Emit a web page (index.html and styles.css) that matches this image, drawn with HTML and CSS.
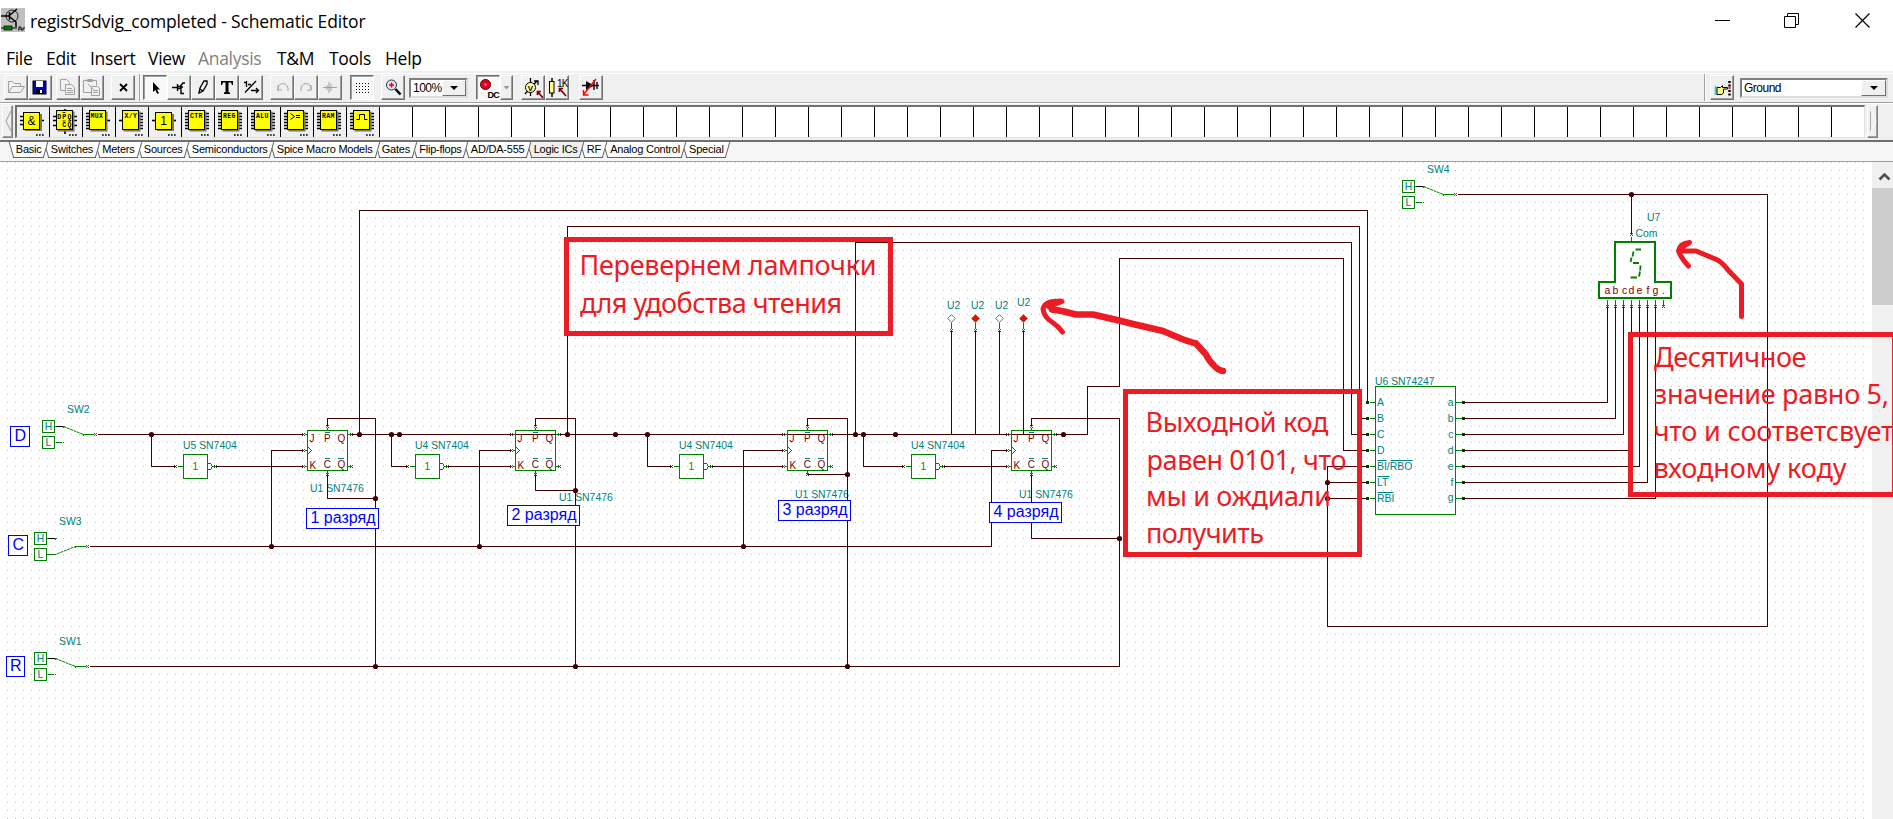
FILE: index.html
```html
<!DOCTYPE html>
<html lang="ru">
<head>
<meta charset="utf-8">
<title>registrSdvig_completed - Schematic Editor</title>
<link rel="stylesheet" href="styles.css">
</head>
<body>
<svg width="0" height="0" class="defs">
  <defs>
    <g id="mark"><path d="M-1.5-1h1M.5-1h1M-1.5 1h1M.5 1h1M-.5 0h1" stroke="#f00000"/></g>
    <g id="node"><circle r="2.6" fill="#400000"/></g>
    <g id="sw-box">
      <rect class="g" width="12" height="12"/><rect class="g" y="16" width="12" height="12"/>
      <text class="lbl" x="2.2" y="9.5">H</text><text class="lbl" x="3" y="25.5">L</text>
      <path d="M13 6h8" stroke="#000"/><path class="g" d="M13 22h6M21 21.5v1M20 6h2M21 5v2M41 14h10M41 13v2"/>
      <use href="#mark" x="53" y="14"/>
    </g>
    <g id="inv">
      <rect class="g" width="24" height="24"/><path class="g" d="M-6 12h6M29 12h3M24 9h3l2 3l-2 3h-3"/>
      <text class="one" x="8.8" y="15.500">1</text>
      <use href="#mark" x="-8" y="12"/><use href="#mark" x="32" y="12"/>
    </g>
    <g id="ff">
      <rect class="g" width="40" height="40"/>
      <path class="g" d="M-3 4h3M-3 20h3M-3 36h3M40 4h3M40 36h3M20-3v3M20 40v3M0 16l4 4l-4 4"/>
      <g class="pin"><text x="2" y="11.5">J</text><text x="16.6" y="11.8">P</text><text x="30" y="11.5">Q</text><text x="2" y="38.500">K</text><text x="16.2" y="37.500">C</text><text x="30" y="37.500">Q</text></g>
      <path d="M17.500 2h5M17.500 28h5M30.500 28h6" stroke="#008080"/>
      <use href="#mark" x="-4" y="4"/><use href="#mark" x="-4" y="20"/><use href="#mark" x="-4" y="36"/>
      <use href="#mark" x="44" y="4"/><use href="#mark" x="44" y="36"/><use href="#mark" x="20" y="-4"/><use href="#mark" x="20" y="44"/>
    </g>
    <g id="lamp"><path class="g" d="M0 4v6"/><path d="M0-3.800l3.800 3.800l-3.800 3.800l-3.800-3.800z" stroke="#008000" stroke-width=".8"/><use href="#mark" y="12"/></g>
    <g id="chip">
      <path d="M4.500 22.500h16v-19" stroke="#777" stroke-width="2" fill="none"/>
      <rect x="3.500" y="2.500" width="16" height="19" fill="#ff0" stroke="#000"/>
    </g>
    <g id="pinsL"><path d="M0 5.500h3M0 8.500h3M0 11.500h3M0 14.500h3M0 17.500h3M0 20.500h3" stroke="#000" stroke-width="1.400"/></g>
    <g id="pinsR"><path d="M20 5.500h4M20 8.500h4M20 11.500h4M20 14.500h4M20 17.500h4M20 20.500h4" stroke="#000" stroke-width="1.400"/></g>
    <g id="more"><path d="M16 27h1.700M19 27h1.700M22 27h1.700" stroke="#000" stroke-width="1.700"/></g>
  </defs>
</svg>

<header class="titlebar">
  <svg class="appicon" width="24" height="24" viewBox="0 0 24 24">
    <rect width="24" height="24" fill="#c0c0c0"/>
    <circle cx="11" cy="8" r="6" fill="none" stroke="#222"/><path d="M0 8h8M8.500 4v8M9 7l7-6M9 9l6 5v5" stroke="#000" stroke-width="1.500" fill="none"/>
    <rect x="3" y="18" width="8" height="4" fill="#008000" stroke="#000" stroke-width=".7"/><path d="M0 20h3M11 20h5M17 22h1v-3h2v3h2v-2h2" stroke="#000" fill="none"/>
  </svg>
  <span class="title">registrSdvig_completed - Schematic Editor</span>
  <svg class="winbtns" width="156" height="16" viewBox="0 0 156 16" fill="none" stroke="#000">
    <path d="M0 7.500h15M69.500 3.500h11v11h-11zM72.500 3v-2.500h11v11h-3"/><path d="M140.500.5l14 14M154.500.5l-14 14" stroke-width="1.200"/>
  </svg>
</header>

<nav class="menu">
  <span class="m1">File</span><span class="m2">Edit</span><span class="m3">Insert</span><span class="m4">View</span><span class="m5">Analysis</span><span class="m6">T&amp;M</span><span class="m7">Tools</span><span>Help</span>
</nav>

<div class="toolbar">
  <div class="group">
    <span class="btn"><svg viewBox="0 0 24 24"><path d="M4.500 17.500v-11h4l2 2h6v3M4.500 17.500l4-6h12l-4 6z" class="dis"/></svg></span>
    <span class="btn"><svg viewBox="0 0 24 24"><rect x="5" y="6" width="13" height="13" fill="#0000c0" stroke="#000"/><rect x="8" y="6" width="7" height="6" fill="#fff"/><rect x="8" y="14" width="7" height="5" fill="#000"/><rect x="12" y="15" width="2" height="3" fill="#fff"/></svg></span>
  </div>
  <div class="group g2">
    <span class="btn"><svg viewBox="0 0 24 24"><path class="dis" d="M9 15.500h-4.500v-11h6l3 3v2M9.500 9.500h6l3 3v7h-9zM11 13.500h5M11 15.500h6M11 17.500h6"/></svg></span>
    <span class="btn"><svg viewBox="0 0 24 24"><path class="dis" d="M11 17.500h-7.500v-12h13v5M7.500 6.500v-2h5v2zM8 9l5 5M11.500 11.500h6l2 2v7h-8zM13 15.500h5M13 17.500h5"/></svg></span>
  </div>
  <div class="group g3"><span class="btn"><svg viewBox="0 0 24 24"><path d="M9 9l7 7M16 9l-7 7" stroke="#000" stroke-width="1.800"/></svg></span></div>
  <i class="sep"></i>
  <div class="group g4">
    <span class="btn on"><svg viewBox="0 0 24 24"><path d="M10 7v10l2.300-2l2 4l1.700-1l-2-3.500h3z" fill="#000"/></svg></span>
    <span class="btn"><svg viewBox="0 0 24 24"><path d="M5 12.500h5M10.500 9v7M11 11.500h2l3-3.500h2M11 13.500h3v5h3M13 12l3 0" stroke="#000" stroke-width="1.400" fill="none"/></svg></span>
    <span class="btn"><svg viewBox="0 0 24 24"><path d="M8 18l1-5l4-7h3v3l-4 7zM9 14l3 2" stroke="#000" stroke-width="1.300" fill="none"/></svg></span>
    <span class="btn"><svg viewBox="0 0 24 24"><path d="M6 6h12v4h-1l-1-2.500h-2.500V17l1.500.5V19h-6v-1.500l1.500-.5V7.500H8L7 10H6z" fill="#000"/></svg></span>
    <span class="btn"><svg viewBox="0 0 24 24"><path d="M7.500 6v6M5 7.500h3M9 9.500h3M6 17.500L17 6M12 15.500h7M17 13l2.500 2.500L17 18" stroke="#000" stroke-width="1.300" fill="none"/></svg></span>
  </div>
  <div class="group g5">
    <span class="btn"><svg viewBox="0 0 24 24"><path class="dis" d="M8 15v-5M7 15h5M8 14c0-6 8-8 10-1v3"/></svg></span>
    <span class="btn"><svg viewBox="0 0 24 24"><path class="dis" d="M17 15v-5M18 15h-5M17 14c0-6-8-8-10-1v3"/></svg></span>
    <span class="btn"><svg viewBox="0 0 24 24"><path class="dis" d="M5 12.500h14M11 7v11M13 9v7M9 10v5"/></svg></span>
  </div>
  <div class="group g6"><span class="btn on"><svg viewBox="0 0 24 24"><path d="M6 8.500h14M6 11.500h14M6 14.500h14M6 17.500h14" stroke="#000" stroke-dasharray="1 2"/></svg></span></div>
  <div class="group g7"><span class="btn"><svg viewBox="0 0 24 24"><circle cx="10.500" cy="10" r="5" fill="#dde6ff" stroke="#333"/><path d="M8 10h5M10.500 7.500v5" stroke="#f00" stroke-width="1.600"/><path d="M14.500 14l5 5.500" stroke="#000" stroke-width="2.600"/></svg></span></div>
  <div class="combo zoom"><span>100%</span><i class="dd"></i></div>
  <div class="group g8">
    <span class="btn on"><svg viewBox="0 0 24 24"><circle cx="9.500" cy="9.500" r="5" fill="#e00010" stroke="#500"/><circle cx="9.500" cy="9.500" r="1.600" fill="#f3f"/><text x="11.500" y="22.500" class="dc">DC</text></svg></span>
    <span class="btn slim"><svg viewBox="0 0 12 24"><path d="M3.500 11h6l-3 3.500z" fill="#999"/></svg></span>
  </div>
  <div class="group g9">
    <span class="btn"><svg viewBox="0 0 24 24"><path d="M9.500 3v18M4 19l12-13M13 6h4v4" stroke="#000" stroke-width="1.300" fill="none"/><circle cx="9.500" cy="12.500" r="5" fill="#ff9" stroke="#000"/><text x="6.800" y="15.500" class="v">V</text><path d="M22 23l-5-6M16.500 20v-3.500H20" stroke="#800000" stroke-width="1.700" fill="none"/></svg></span>
    <span class="btn"><svg viewBox="0 0 24 24"><path d="M7 3v19" stroke="#000" stroke-width="1.500"/><rect x="4.500" y="6.500" width="4.500" height="11.500" fill="#ff8" stroke="#000"/><text x="12" y="11.500" class="k">1K</text><path d="M21 21l-6-7M14.500 17v-3.500H18" stroke="#800000" stroke-width="1.700" fill="none"/></svg></span>
  </div>
  <div class="group g10"><span class="btn"><svg viewBox="0 0 24 24"><path d="M3 10.500h17M15 5v10M18 7v7" stroke="#000" stroke-width="1.400"/><path d="M7 6v9l8-4.500z" fill="#000"/><path d="M17 4L5 19M4.500 15v5h5" stroke="#f00" stroke-width="1.400" fill="none"/></svg></span></div>
  <i class="sep right"></i>
  <div class="group g11"><span class="btn"><svg viewBox="0 0 24 24"><path d="M5.500 11v9" stroke="#0dd" stroke-width="1.600"/><path d="M7 12.500h3.500l2-2v2h5v1.500h-4v4l-2 1.500h-4.500z" fill="#ff8" stroke="#000"/><path d="M19.500 6v2M19.500 9.500v2M19.500 15v2M19.500 18.500v2" stroke="#000" stroke-width="2.500"/><path d="M19.500 12v2" stroke="#f00" stroke-width="2"/></svg></span></div>
  <div class="combo ground"><span>Ground</span><i class="dd"></i></div>
</div>

<div class="partsbar">
  <span class="scroll"><svg viewBox="0 0 10 30"><path d="M8 5L3 15l5 10" stroke="#999" fill="none"/></svg></span>
  <div class="parts">
    <span class="part"><svg viewBox="0 0 24 29"><path d="M0 8.500h4M0 12.500h4M0 16.500h4M20 12.500h4" stroke="#000" stroke-width="1.600"/><path d="M5 22h16V6" stroke="#777" stroke-width="2" fill="none"/><rect x="3.500" y="4.500" width="16" height="17" fill="#ff0" stroke="#000"/><text x="7.500" y="17" class="amp">&amp;</text><use href="#more"/></svg></span>
    <span class="part"><svg viewBox="0 0 24 29"><path d="M0 8.500h24M0 12.500h24M0 17.500h24M12 1v25" stroke="#000" stroke-width="1.600"/><use href="#chip"/><text x="4.300" y="10.500" class="pt">D</text><text x="9.300" y="10.500" class="pt">P</text><text x="14.500" y="10.500" class="pt">Q</text><text x="9.300" y="19" class="pt">C</text><text x="14.500" y="19" class="pt">Q</text><path d="M9.500 4.500h3M9.500 13h3M15 13h3" stroke="#000" stroke-width=".8"/><use href="#more"/></svg></span>
    <span class="part"><svg viewBox="0 0 24 29"><use href="#pinsL"/><path d="M20 12.500h4" stroke="#000" stroke-width="1.600"/><use href="#chip"/><text x="4.500" y="9.500" class="pt">MUX</text><use href="#more"/></svg></span>
    <span class="part"><svg viewBox="0 0 24 29"><path d="M0 12.500h4" stroke="#000" stroke-width="1.600"/><use href="#pinsR"/><use href="#chip"/><text x="5.500" y="9.500" class="pt">X/Y</text><use href="#more"/></svg></span>
    <span class="part"><svg viewBox="0 0 24 29"><path d="M0 12.500h24" stroke="#000" stroke-width="1.600"/><path d="M5 22h16V6" stroke="#777" stroke-width="2" fill="none"/><rect x="3.500" y="4.500" width="16" height="17" fill="#ff0" stroke="#000"/><text x="8.300" y="17" class="amp">1</text><use href="#more"/></svg></span>
    <span class="part"><svg viewBox="0 0 24 29"><use href="#pinsL"/><use href="#pinsR"/><use href="#chip"/><text x="5" y="9.500" class="pt">CTR</text><use href="#more"/></svg></span>
    <span class="part"><svg viewBox="0 0 24 29"><use href="#pinsL"/><use href="#pinsR"/><use href="#chip"/><text x="5" y="9.500" class="pt">REG</text><use href="#more"/></svg></span>
    <span class="part"><svg viewBox="0 0 24 29"><use href="#pinsL"/><use href="#pinsR"/><use href="#chip"/><text x="5" y="9.500" class="pt">ALU</text><use href="#more"/></svg></span>
    <span class="part"><svg viewBox="0 0 24 29"><use href="#pinsL"/><use href="#pinsR"/><use href="#chip"/><path d="M6.500 5.500l4 3l-4 3M12 7.500h4M12 9.500h4" stroke="#000" fill="none"/><use href="#more"/></svg></span>
    <span class="part"><svg viewBox="0 0 24 29"><use href="#pinsL"/><use href="#pinsR"/><use href="#chip"/><text x="5" y="9.500" class="pt">RAM</text><use href="#more"/></svg></span>
    <span class="part"><svg viewBox="0 0 24 29"><use href="#pinsL"/><use href="#pinsR"/><use href="#chip"/><path d="M6.500 11.500h3v-5h5v5h3" stroke="#000" fill="none"/><use href="#more"/></svg></span>
    <span class="slots"></span>
  </div>
  <span class="scroll"><svg viewBox="0 0 10 30"><path d="M2.500 5v20" stroke="#aaa"/><path d="M3 5l5 10l-5 10" stroke="#fff" fill="none"/></svg></span>
</div>

<div class="tabs">
  <span class="tab"><b>Basic</b></span><span class="tab"><b>Switches</b></span><span class="tab"><b>Meters</b></span><span class="tab"><b>Sources</b></span><span class="tab"><b>Semiconductors</b></span><span class="tab"><b>Spice Macro Models</b></span><span class="tab"><b>Gates</b></span><span class="tab"><b>Flip-flops</b></span><span class="tab"><b>AD/DA-555</b></span><span class="tab active"><b>Logic ICs</b></span><span class="tab"><b>RF</b></span><span class="tab"><b>Analog Control</b></span><span class="tab"><b>Special</b></span>
</div>

<main class="work">
  <svg class="sheet" width="1872" height="657" viewBox="0 162 1872 657">
    <defs><pattern id="grid" width="8" height="8" patternUnits="userSpaceOnUse"><rect x="7" y="2" width="1" height="1" fill="#c0c0c0"/></pattern></defs>
    <rect x="0" y="162" width="1867" height="657" fill="url(#grid)"/>
    <g transform="translate(.5 .5)">
      <use href="#sw-box" x="42" y="420"/><path class="arm" d="M63 426L83 434"/>
      <use href="#sw-box" x="34" y="652"/><path class="arm" d="M55 658L75 666"/>
      <use href="#sw-box" x="34" y="532"/><path class="arm" d="M46 554h9L75 546"/>
      <use href="#sw-box" x="1402" y="180"/><path class="arm" d="M1423 186L1443 194"/>
      <use href="#inv" x="183" y="454"/><use href="#inv" x="415" y="454"/><use href="#inv" x="679" y="454"/><use href="#inv" x="911" y="454"/>
      <g class="lbl">
        <text x="66.500" y="412.500">SW2</text><text x="58.500" y="524.500">SW3</text><text x="58.500" y="644.500">SW1</text><text x="1426.500" y="172.500">SW4</text>
        <text x="182.500" y="448.500">U5 SN7404</text><text x="414.500" y="448.500">U4 SN7404</text><text x="678.500" y="448.500">U4 SN7404</text><text x="910.500" y="448.500">U4 SN7404</text>
        <text x="309.500" y="491.500">U1 SN7476</text><text x="558.500" y="500.500">U1 SN7476</text><text x="794.500" y="497.500">U1 SN7476</text><text x="1018.500" y="497.500">U1 SN7476</text>
        <text x="946.500" y="308.500">U2</text><text x="970.500" y="308.500">U2</text><text x="994.500" y="308.500">U2</text><text x="1016.500" y="305.500">U2</text>
        <text x="1646.500" y="220.500">U7</text><text x="1635" y="236.500">Com</text><text x="1374.500" y="384">U6 SN74247</text>
        <text x="1376.500" y="405.500">A</text><text x="1376.500" y="421.500">B</text><text x="1376.500" y="437.500">C</text><text x="1376.500" y="453.500">D</text><text x="1376.500" y="469.500">BI/RBO</text><text x="1376.500" y="485.500">LT</text><text x="1376.500" y="501.500">RBI</text>
        <g text-anchor="end"><text x="1453" y="405.500">a</text><text x="1453" y="421.500">b</text><text x="1453" y="437.500">c</text><text x="1453" y="453.500">d</text><text x="1453" y="469.500">e</text><text x="1453" y="485.500">f</text><text x="1453" y="500.500">g</text></g>
      </g>
      <path class="over" d="M1377 460h9M1390 460h22M1377 476h12M1377 492h16"/>
      <rect class="g" x="1375" y="386" width="80" height="128"/>

      <path class="wire" d="M97 434H303M351 434H1087V386H1119V258H1343V450H1367
        M151 434V466H175M215 466H303M391 434V466H407M447 466H511M647 434V466H671M711 466H783M863 434V466H903M943 466H1007
        M89 546H991V450H1007M271 546V450H303M479 546V450H511M743 546V450H783
        M89 666H1119V418H1031V426M327 426V418H375V666M535 426V418H575V666M807 426V418H847V666
        M327 474V498H375M535 474V490H575M807 474H847M1031 474V538H1119
        M359 434V210H1367V402M567 434V226H1359V418H1367M855 434V242H1351V434H1367
        M951 330V434M975 330V434M999 330V434M1023 330V434
        M1367 466H1327V626H1767V194H1457M1327 482H1367M1327 498H1367M1631 194V234
        M1463 402H1607V306M1463 418H1615V306M1463 434H1623V306M1463 450H1631V306M1463 466H1639V306M1463 482H1647V306M1463 498H1655V306"/>
      <path class="g" d="M1369 402h6M1369 418h6M1369 434h6M1369 450h6M1369 466h6M1369 482h6M1369 498h6M1455 402h7M1455 418h7M1455 434h7M1455 450h7M1455 466h7M1455 482h7M1455 498h7"/>
      <path class="pads" d="M1367 400.500v99M1463 400.500v99"/>
      <use href="#ff" x="307" y="430"/><use href="#ff" x="515" y="430"/><use href="#ff" x="787" y="430"/><use href="#ff" x="1011" y="430"/>
      <use href="#lamp" x="951" y="318" fill="#fff"/><use href="#lamp" x="975" y="318" fill="#f00"/><use href="#lamp" x="999" y="318" fill="#fff"/><use href="#lamp" x="1023" y="318" fill="#f00"/>

      <use href="#node" x="151" y="434"/><use href="#node" x="359" y="434"/><use href="#node" x="391" y="434"/><use href="#node" x="399" y="434"/><use href="#node" x="567" y="434"/><use href="#node" x="615" y="434"/><use href="#node" x="647" y="434"/><use href="#node" x="855" y="434"/><use href="#node" x="863" y="434"/><use href="#node" x="895" y="434"/><use href="#node" x="1063" y="434"/>
      <use href="#node" x="271" y="546"/><use href="#node" x="479" y="546"/><use href="#node" x="743" y="546"/>
      <use href="#node" x="375" y="498"/><use href="#node" x="375" y="666"/><use href="#node" x="575" y="490"/><use href="#node" x="575" y="666"/><use href="#node" x="847" y="474"/><use href="#node" x="847" y="666"/><use href="#node" x="1119" y="538"/>
      <use href="#node" x="1327" y="482"/><use href="#node" x="1327" y="498"/><use href="#node" x="1631" y="194"/>

      <path d="M1614.500 281.500V241.500H1654.500V281.500H1670.500V297.500H1598.500V281.500Z" fill="#fff" stroke="#008000" stroke-width="2"/>
      <path class="seg" d="M1635 249h5.500M1633 251l-1 5M1631 257l-.8 4.500M1632.500 262.500h6M1640 265l-.3 5M1639.500 271l-1 5M1630 277h6.500"/>
      <g class="pin seven"><text x="1607" y="293">a</text><text x="1615" y="293">b</text><text x="1624" y="293">c</text><text x="1631" y="293">d</text><text x="1639" y="293">e</text><text x="1647.500" y="293">f</text><text x="1655" y="293">g</text><text x="1663" y="293">.</text></g>
      <path class="g" d="M1631 236v5M1607 299v6M1615 299v6M1623 299v6M1631 299v6M1639 299v6M1647 299v6M1655 299v6M1663 299v6"/>
      <use href="#mark" x="1631" y="234"/><use href="#mark" x="1607" y="306"/><use href="#mark" x="1615" y="306"/><use href="#mark" x="1623" y="306"/><use href="#mark" x="1631" y="306"/><use href="#mark" x="1639" y="306"/><use href="#mark" x="1647" y="306"/><use href="#mark" x="1655" y="306"/><use href="#mark" x="1663" y="306"/>

      <g class="tag">
        <rect x="10" y="426" width="19" height="20"/><rect x="8" y="535" width="19" height="20"/><rect x="6" y="656" width="18" height="20"/>
        <rect x="306" y="508" width="72" height="20"/><rect x="507" y="505" width="72" height="20"/><rect x="778" y="500" width="72" height="20"/><rect x="989" y="502" width="72" height="20"/>
        <text x="14" y="440.500">D</text><text x="12" y="549.500">C</text><text x="9.500" y="670">R</text>
        <text x="310" y="522.500" textLength="65">1 разряд</text><text x="511" y="519.500" textLength="65">2 разряд</text><text x="782" y="514.500" textLength="65">3 разряд</text><text x="993" y="516.500" textLength="65">4 разряд</text>
      </g>
    </g>
  </svg>

  <aside class="scrollbar">
    <svg width="21" height="26" viewBox="0 0 21 26"><path d="M7.500 17.500l5-5l5 5" fill="none" stroke="#505050" stroke-width="2.600"/></svg>
    <div class="thumb"></div>
  </aside>

  <svg class="notes" width="1893" height="657" viewBox="0 162 1893 657">
    <rect x="566.500" y="239.500" width="324" height="94"/><rect x="1125.500" y="391.500" width="234" height="163"/><rect x="1630.500" y="334.500" width="264" height="160"/>
    <path class="long" d="M1223 371Q1218 370.500 1213 364.500Q1209 361 1206 354.500L1196 343.500Q1187 341 1182 339L1163 331L1133 324L1117 320L1093 314.500H1076L1062 311L1052 309.500"/>
    <path d="M1053 310Q1049 307 1053 305L1062 301.500Q1045 300 1043 309Q1044 317 1052 322Q1058 326 1062.500 332M1049 307L1060 301"/>
    <path d="M1741.500 316.500V284L1728 270Q1722 262 1716.500 259.500L1696 251H1679M1689.500 242.500Q1680 243 1678.500 251Q1681 258 1688.500 266M1680 248L1689 243"/>
    <g>
      <text x="579.500" y="275" textLength="297">Перевернем лампочки</text><text x="580" y="313" textLength="262">для удобства чтения</text>
      <text x="1145.500" y="432" textLength="183">Выходной код</text><text x="1146.500" y="469.500" textLength="200">равен 0101, что</text><text x="1146" y="506" textLength="185">мы и ождиали</text><text x="1146" y="543" textLength="118">получить</text>
      <text x="1654" y="367" textLength="152.500">Десятичное</text><text x="1654" y="404" textLength="235">значение равно 5,</text><text x="1653.500" y="440.500" textLength="240">что и соответсвует</text><text x="1653.500" y="477.500" textLength="193">входному коду</text>
    </g>
  </svg>
</main>
</body>
</html>
```

FILE: styles.css
```css
* { box-sizing: border-box; }
body { margin: 0; width: 1893px; height: 819px; overflow: hidden; background: #fff; display: flex; flex-direction: column; color: #000; }
.defs { position: absolute; }

.titlebar { height: 40px; display: flex; align-items: flex-start; padding: 0 22px 0 1px; }
.appicon { margin-top: 8px; }
.title { font: 17.5px/24px "Open Sans", "Noto Sans", sans-serif; margin: 9px auto 0 5px; letter-spacing: -.15px; }
.winbtns { margin-top: 13px; }
.menu { height: 31px; padding-left: 6px; display: flex; font: 17.5px/24px "Open Sans", "Noto Sans", sans-serif; letter-spacing: -.3px; padding-top: 6px; }
.m1 { width: 40px; } .m2 { width: 44px; } .m3 { width: 58px; } .m4 { width: 50px; }
.m5 { width: 79px; color: #808080; } .m6 { width: 52px; } .m7 { width: 56px; }

.toolbar { height: 32px; background: #f0f0f0; border-top: 2px solid #f0f0f0; border-bottom: 1px solid #a0a0a0; box-shadow: inset 0 1px #fff; display: flex; align-items: flex-start; padding: 2px 5px 0 4px; }
.group { display: flex; }
.btn { width: 24px; height: 25px; background: #f0f0f0; border: 1px solid; border-color: #fff #707070 #707070 #fff; box-shadow: inset -1px -1px #a0a0a0; display: block; }
.btn svg { display: block; width: 24px; height: 24px; margin: -1px 0 0 -1px; }
.btn.on { background: #f8f8f8; border-color: #707070 #fff #fff #707070; box-shadow: inset 1px 1px #a0a0a0; }
.btn.slim { width: 13px; }
.btn.slim svg { width: 12px; }
.dis { fill: none; stroke: #a0a0a0; }
.g2 { margin-left: 4px; } .g3 { margin-left: 7px; }
.sep { width: 2px; height: 27px; margin: -1px 0 0 4px; border-left: 1px solid #a0a0a0; background: #fff; }
.g4 { margin-left: 2px; } .g5 { margin-left: 7px; } .g6 { margin-left: 8px; } .g7 { margin-left: 7px; }
.combo { height: 20px; margin-top: 3px; background: #fff; border: 2px solid; border-color: #808080 #ddd #ddd #808080; display: flex; justify-content: space-between; font: 12px/16px "Liberation Sans", Arial, sans-serif; padding-left: 2px; letter-spacing: -.5px; }
.zoom { width: 59px; margin-left: 4px; }
.ground { width: 148px; margin-left: 6px; }
.dd { width: 25px; height: 16px; background: #f0f0f0; border: 1px solid; border-color: #fff #707070 #707070 #fff; display: flex; justify-content: center; align-items: center; }
.dd::after { content: ""; border: 4px solid transparent; border-top-color: #000; border-bottom: 0; }
.g8 { margin-left: 8px; } .g9 { margin-left: 8px; } .g10 { margin-left: 10px; }
.right { margin-left: auto; } .g11 { margin-left: 4px; }
.dc { font: bold 9px "Liberation Sans", sans-serif; letter-spacing: -.8px; }
.v { font: bold 8px "Liberation Sans", sans-serif; }
.k { font: 10px "Liberation Sans", sans-serif; letter-spacing: -.7px; }

.partsbar { height: 39px; background: #f0f0f0; border-top: 1px solid #fff; border-bottom: 2px solid #707070; display: flex; padding: 1px 0 0 2px; }
.scroll { flex: none; width: 11px; height: 33px; border: 1px solid; border-color: #fff #808080 #808080 #fff; box-shadow: inset -1px -1px #a0a0a0; }
.scroll svg { width: 10px; height: 30px; display: block; }
.parts { flex: none; width: 1850px; height: 33px; border: 1px solid #e0e0e0; border-top: 2px solid #707070; border-left: 2px solid #707070; display: flex; background: #fff; margin: 0 2px; }
.part { width: 33px; height: 30px; background: #f0f0f0; border-right: 1px solid #000; padding: 1px 0 0 3px; flex: none; }
.part svg { width: 24px; height: 29px; display: block; }
.slots { flex: 1; background: repeating-linear-gradient(90deg, #fff 0 32px, #000 32px 33px); }
.pt { font: bold 6.500px "Liberation Mono", monospace; letter-spacing: .4px; }
.amp { font: 12px "Liberation Sans", sans-serif; }

.tabs { height: 20px; background: #f6f6f6; border-bottom: 1px solid #a0a0a0; display: flex; padding-left: 9px; font: 11px/14px "Liberation Sans", Arial, sans-serif; }
.tab { position: relative; height: 15px; padding: 0 6.800px; margin-right: -4.400px; letter-spacing: -.22px; }
.tab b { position: relative; z-index: 2; font-weight: normal; white-space: nowrap; display: block; }
.tab::before, .tab::after { content: ""; position: absolute; top: 0; height: 15px; width: 52%; background: #fff; border-bottom: 1px solid #606060; }
.tab::before { left: 2px; z-index: 0; border-left: 1px solid #606060; transform: skewX(16deg); }
.tab::after { right: 2px; z-index: 1; border-right: 1px solid #606060; transform: skewX(-16deg); }
.tab.active::before, .tab.active::after { background: #f0f0f0; }

.work { flex: 1; position: relative; display: flex; }
.sheet { flex: none; display: block; }
.g { fill: none; stroke: #008000; shape-rendering: crispEdges; }
#mark path { shape-rendering: crispEdges; }
.arm { fill: none; stroke: #008000; stroke-dasharray: 3 .6; }
.pads { stroke: #004000; stroke-width: 3; stroke-dasharray: 3 13; }
.lbl { font: 10.400px "Liberation Sans", Arial, sans-serif; fill: #008080; }
.one { font: 11px "Liberation Sans", Arial, sans-serif; fill: #408000; }
.pin { font: 10px "Liberation Sans", Arial, sans-serif; fill: #800000; }
.seven { text-anchor: middle; font-size: 10.500px; }
.over { stroke: #008080; }
.wire { fill: none; stroke: #400000; shape-rendering: crispEdges; }
.seg { fill: none; stroke: #008000; stroke-width: 1.800; }
.tag rect { fill: #fff; stroke: #00f; }
.tag text { font: 16px "Liberation Sans", Arial, sans-serif; fill: #00f; }
.scrollbar { width: 21px; background: #f0f0f0; }
.scrollbar svg { display: block; }
.thumb { height: 117px; background: #cdcdcd; }
.notes { position: absolute; left: 0; top: 0; fill: none; stroke: #ed1c24; stroke-width: 5; stroke-linecap: round; stroke-linejoin: round; }
.notes rect { stroke-linejoin: miter; }
.notes .long { stroke-width: 6.500; }
.notes text { font: 27px "Noto Sans", "Open Sans", sans-serif; fill: #ed1c24; stroke: none; }
```
